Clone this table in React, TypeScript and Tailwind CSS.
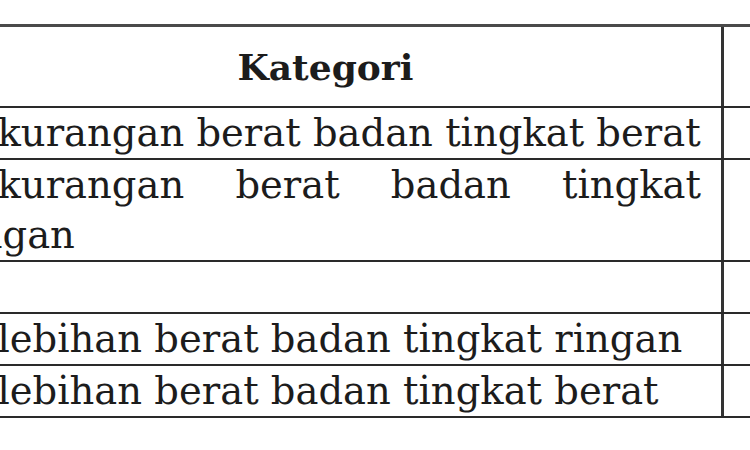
const rows: string[] = [
  'Kekurangan berat badan tingkat berat',
  'Kekurangan berat badan tingkat ringan',
  '',
  'Kelebihan berat badan tingkat ringan',
  'Kelebihan berat badan tingkat berat',
];

export default function App() {
  return (
    <div className="w-[750px] h-[450px] overflow-hidden bg-white pt-[24px] font-['DejaVu_Serif',serif] text-[#1c1c1c]">
      <div className="ml-[-60px] w-[860px] border-t-[3px] border-[#4a4a4a]">
        <div className="flex border-b-2 border-[#2a2a2a]">
          <div className="w-[784px] h-[79px] border-r-[3px] border-[#333] pl-[8px] pr-[18px] flex items-center justify-center">
            <span className="text-[36px] font-bold leading-none">Kategori</span>
          </div>
          <div className="flex-1" />
        </div>
        {rows.map((text, i) => (
          <div key={i} className="flex border-b-2 border-[#2a2a2a]">
            <div className="w-[784px] min-h-[50px] border-r-[3px] border-[#333] pl-[7px] pr-[20px] text-[38.5px] leading-[50px] text-justify">
              {text}
            </div>
            <div className="flex-1" />
          </div>
        ))}
      </div>
    </div>
  );
}
